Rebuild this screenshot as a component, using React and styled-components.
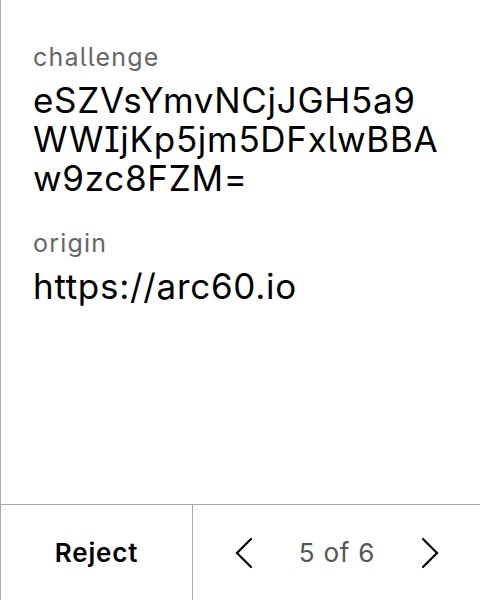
import React from 'react';
import styled, { createGlobalStyle } from 'styled-components';

const GlobalStyle = createGlobalStyle`
  html, body {
    margin: 0;
    padding: 0;
    background: #fff;
  }
  body {
    font-family: Inter, "Noto Sans", sans-serif;
    font-feature-settings: 'cv05', 'cv08';
    color: #000;
  }
`;

const Screen = styled.div`
  width: 480px;
  height: 600px;
  box-sizing: border-box;
  border-left: 1px solid #a8a8a8;
  display: flex;
  flex-direction: column;
`;

const Body = styled.div`
  flex: 1;
  padding: 41px 33px 0 32px;
`;

const Field = styled.div`
  & + & {
    margin-top: 29px;
  }
`;

const Label = styled.div`
  font-size: 25px;
  line-height: 32px;
  letter-spacing: 1.2px;
  color: #666;
  margin-bottom: 8px;
`;

const Value = styled.div`
  font-size: 35px;
  line-height: 39px;
  letter-spacing: 0.7px;
  word-break: break-all;
`;

const Footer = styled.div`
  height: 96px;
  box-sizing: border-box;
  border-top: 1px solid #a8a8a8;
  display: grid;
  grid-template-columns: 192px 1fr;
`;

const RejectButton = styled.button`
  border: 0;
  border-right: 1px solid #a8a8a8;
  background: none;
  font-family: inherit;
  font-size: 26px;
  letter-spacing: 0.8px;
  font-weight: 600;
  color: #000;
  padding: 0;
`;

const Pager = styled.div`
  display: flex;
  align-items: center;
  justify-content: space-between;
  padding: 0 41px 0 42px;
`;

const PagerText = styled.span`
  font-size: 26px;
  letter-spacing: 0.8px;
  color: #555;
`;

const Arrow = styled.button`
  border: 0;
  background: none;
  padding: 0;
  display: flex;
`;

const Chevron = ({ dir }) => (
  <svg width="18" height="32" viewBox="0 0 18 32" fill="none">
    <path
      d={dir === 'left' ? 'M16 2 L2 16 L16 30' : 'M2 2 L16 16 L2 30'}
      stroke="#000"
      strokeWidth="2.2"
      strokeLinecap="round"
      strokeLinejoin="miter"
    />
  </svg>
);

export default function App() {
  return (
    <>
      <GlobalStyle />
      <Screen>
        <Body>
          <Field>
            <Label>challenge</Label>
            <Value>eSZVsYmvNCjJGH5a9WWIjKp5jm5DFxlwBBAw9zc8FZM=</Value>
          </Field>
          <Field>
            <Label>origin</Label>
            <Value>https://arc60.io</Value>
          </Field>
        </Body>
        <Footer>
          <RejectButton>Reject</RejectButton>
          <Pager>
            <Arrow>
              <Chevron dir="left" />
            </Arrow>
            <PagerText>5 of 6</PagerText>
            <Arrow>
              <Chevron dir="right" />
            </Arrow>
          </Pager>
        </Footer>
      </Screen>
    </>
  );
}
